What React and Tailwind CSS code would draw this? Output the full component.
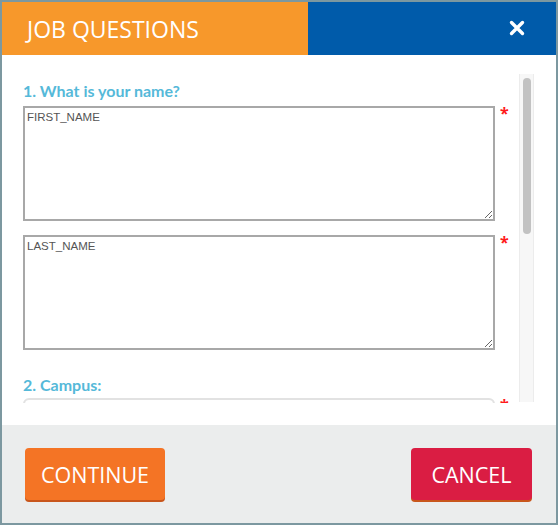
import React from "react";

export default function App() {
  const open = { fontFamily: '"Open Sans", "Liberation Sans", sans-serif' };
  const label = { fontFamily: 'Lato, "Noto Sans", sans-serif' };
  const mono = { fontFamily: '"Liberation Sans", Arial, sans-serif' };
  return (
    <div className="w-[558px] h-[525px] bg-[#7c98a0] pt-[2px] pl-[2px] pr-[2px] pb-[2px] overflow-hidden">
      <div className="w-[554px] h-[521px] flex flex-col bg-white">
        {/* header */}
        <div className="flex h-[53px] shrink-0">
          <div className="w-[306px] bg-[#F7982B] flex items-center pl-[25px]">
            <span style={open} className="text-white text-[23px] leading-none mt-[2px]">JOB QUESTIONS</span>
          </div>
          <div className="flex-1 bg-[#005BAA] flex items-center justify-end pr-[31px]">
            <svg width="16" height="16" viewBox="0 0 16 16" className="mt-[-2px]">
              <path d="M2.5 2.5 L13.5 13.5 M13.5 2.5 L2.5 13.5" stroke="white" strokeWidth="3.4" strokeLinecap="round" />
            </svg>
          </div>
        </div>
        {/* body */}
        <div className="h-[370px] shrink-0 pt-[20px] flex">
          <div className="w-[515px] h-[328px] overflow-hidden pl-[21px]">
            <div style={label} className="text-[#55B9D9] text-[16px] font-bold leading-[24px] mt-[4px]">1. What is your name?</div>
            <div className="flex items-start mt-[3px]">
              <textarea
                readOnly
                defaultValue="FIRST_NAME"
                style={mono}
                className="w-[472px] h-[115px] border-2 border-[#a8a8a8] text-[11.5px] text-[#555] px-[2px] py-[2px] leading-[14px] outline-none resize"
              />
              <span className="text-[#ff1a1a] text-[16px] font-bold ml-[5px] mt-[-1px] leading-none">*</span>
            </div>
            <div className="flex items-start mt-[14px]">
              <textarea
                readOnly
                defaultValue="LAST_NAME"
                style={mono}
                className="w-[472px] h-[115px] border-2 border-[#a8a8a8] text-[11.5px] text-[#555] px-[2px] py-[2px] leading-[14px] outline-none resize"
              />
              <span className="text-[#ff1a1a] text-[16px] font-bold ml-[5px] mt-[-1px] leading-none">*</span>
            </div>
            <div style={label} className="text-[#55B9D9] text-[16px] font-bold leading-[24px] mt-[23px]">2. Campus:</div>
            <div className="flex items-start mt-[1px]">
              <div className="w-[472px] h-[34px] border-2 border-[#e2e2e2] rounded-[6px]" />
              <span className="text-[#ff1a1a] text-[16px] font-bold ml-[5px] mt-[-1px] leading-none">*</span>
            </div>
          </div>
          <div className="w-[15px] h-[328px] ml-[2px] mt-[-1px] bg-[#f7f7f7] border-l border-r border-[#ececec] flex justify-center pt-[4px]">
            <div className="w-[8px] h-[156px] rounded-full bg-[#c2c2c2]" />
          </div>
        </div>
        {/* footer */}
        <div className="flex-1 bg-[#EBEDED] flex items-start justify-between pl-[23px] pr-[24px] pt-[23px]">
          <button style={open} className="w-[140px] h-[52px] rounded-[4px] bg-[#F47425] text-white text-[21.5px] shadow-[0_2px_0_#c8561c] pt-[2px]">
            CONTINUE
          </button>
          <button style={open} className="w-[121px] h-[52px] rounded-[4px] bg-[#DA1D43] text-white text-[21.5px] shadow-[0_2px_0_#c8561c] pt-[2px]">
            CANCEL
          </button>
        </div>
      </div>
    </div>
  );
}
